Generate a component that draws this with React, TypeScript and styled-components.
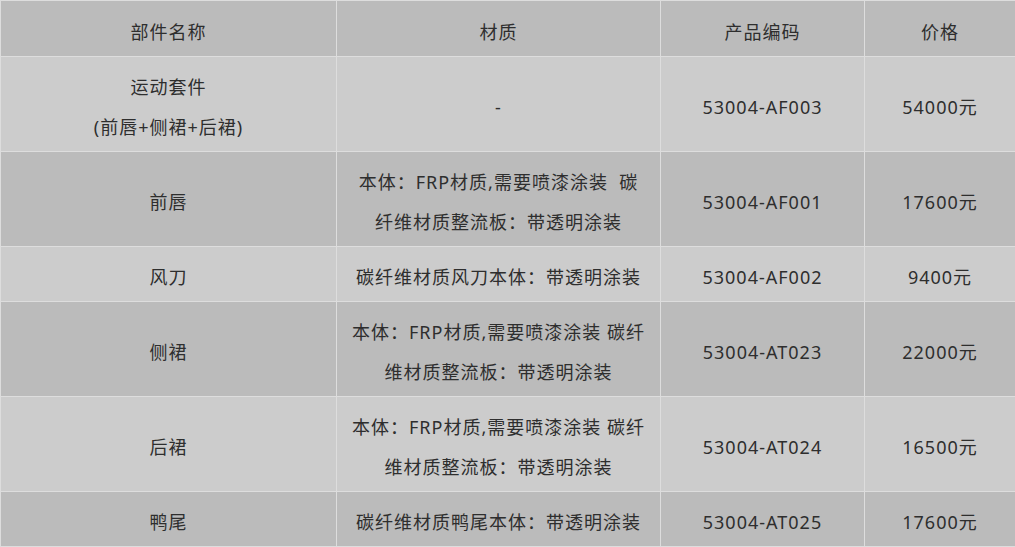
import React from "react";
import styled, { createGlobalStyle } from "styled-components";

type Part = {
  name: React.ReactNode;
  material: React.ReactNode;
  code: string;
  price: string;
};

const parts: Part[] = [
  {
    name: (
      <>
        运动套件
        <br />
        (前唇+侧裙+后裙)
      </>
    ),
    material: "-",
    code: "53004-AF003",
    price: "54000元",
  },
  {
    name: "前唇",
    material: (
      <>
        本体：FRP材质,需要喷漆涂装&nbsp;&nbsp;碳
        <br />
        纤维材质整流板：带透明涂装
      </>
    ),
    code: "53004-AF001",
    price: "17600元",
  },
  {
    name: "风刀",
    material: "碳纤维材质风刀本体：带透明涂装",
    code: "53004-AF002",
    price: "9400元",
  },
  {
    name: "侧裙",
    material: (
      <>
        本体：FRP材质,需要喷漆涂装 碳纤
        <br />
        维材质整流板：带透明涂装
      </>
    ),
    code: "53004-AT023",
    price: "22000元",
  },
  {
    name: "后裙",
    material: (
      <>
        本体：FRP材质,需要喷漆涂装 碳纤
        <br />
        维材质整流板：带透明涂装
      </>
    ),
    code: "53004-AT024",
    price: "16500元",
  },
  {
    name: "鸭尾",
    material: "碳纤维材质鸭尾本体：带透明涂装",
    code: "53004-AT025",
    price: "17600元",
  },
];

const GlobalStyle = createGlobalStyle`
  body {
    margin: 0;
    background: #ffffff;
    font-family: "Noto Sans", "Noto Sans CJK SC", sans-serif;
  }
`;

const PriceTable = styled.table`
  width: 1015px;
  border-collapse: collapse;
  table-layout: fixed;
  color: #2e2e2e;
  font-size: 18px;
  letter-spacing: 1px;
  line-height: 40px;
`;

const HeadCell = styled.th`
  background: #bbbbbb;
  border: 1px solid #dddddd;
  padding: 11px 8px 4px;
  font-weight: normal;
  text-align: center;
`;

const Row = styled.tr<{ $dark: boolean }>`
  background: ${(p) => (p.$dark ? "#bbbbbb" : "#cccccc")};
`;

const Cell = styled.td`
  border: 1px solid #dddddd;
  padding: 10px 8px 4px;
  text-align: center;
  vertical-align: middle;
  white-space: nowrap;
`;

export default function App() {
  return (
    <>
      <GlobalStyle />
      <PriceTable>
        <colgroup>
          <col style={{ width: 336 }} />
          <col style={{ width: 324 }} />
          <col style={{ width: 204 }} />
          <col style={{ width: 151 }} />
        </colgroup>
        <thead>
          <tr>
            <HeadCell>部件名称</HeadCell>
            <HeadCell>材质</HeadCell>
            <HeadCell>产品编码</HeadCell>
            <HeadCell>价格</HeadCell>
          </tr>
        </thead>
        <tbody>
          {parts.map((part, i) => (
            <Row key={part.code} $dark={i % 2 === 1}>
              <Cell>{part.name}</Cell>
              <Cell>{part.material}</Cell>
              <Cell>{part.code}</Cell>
              <Cell>{part.price}</Cell>
            </Row>
          ))}
        </tbody>
      </PriceTable>
    </>
  );
}
